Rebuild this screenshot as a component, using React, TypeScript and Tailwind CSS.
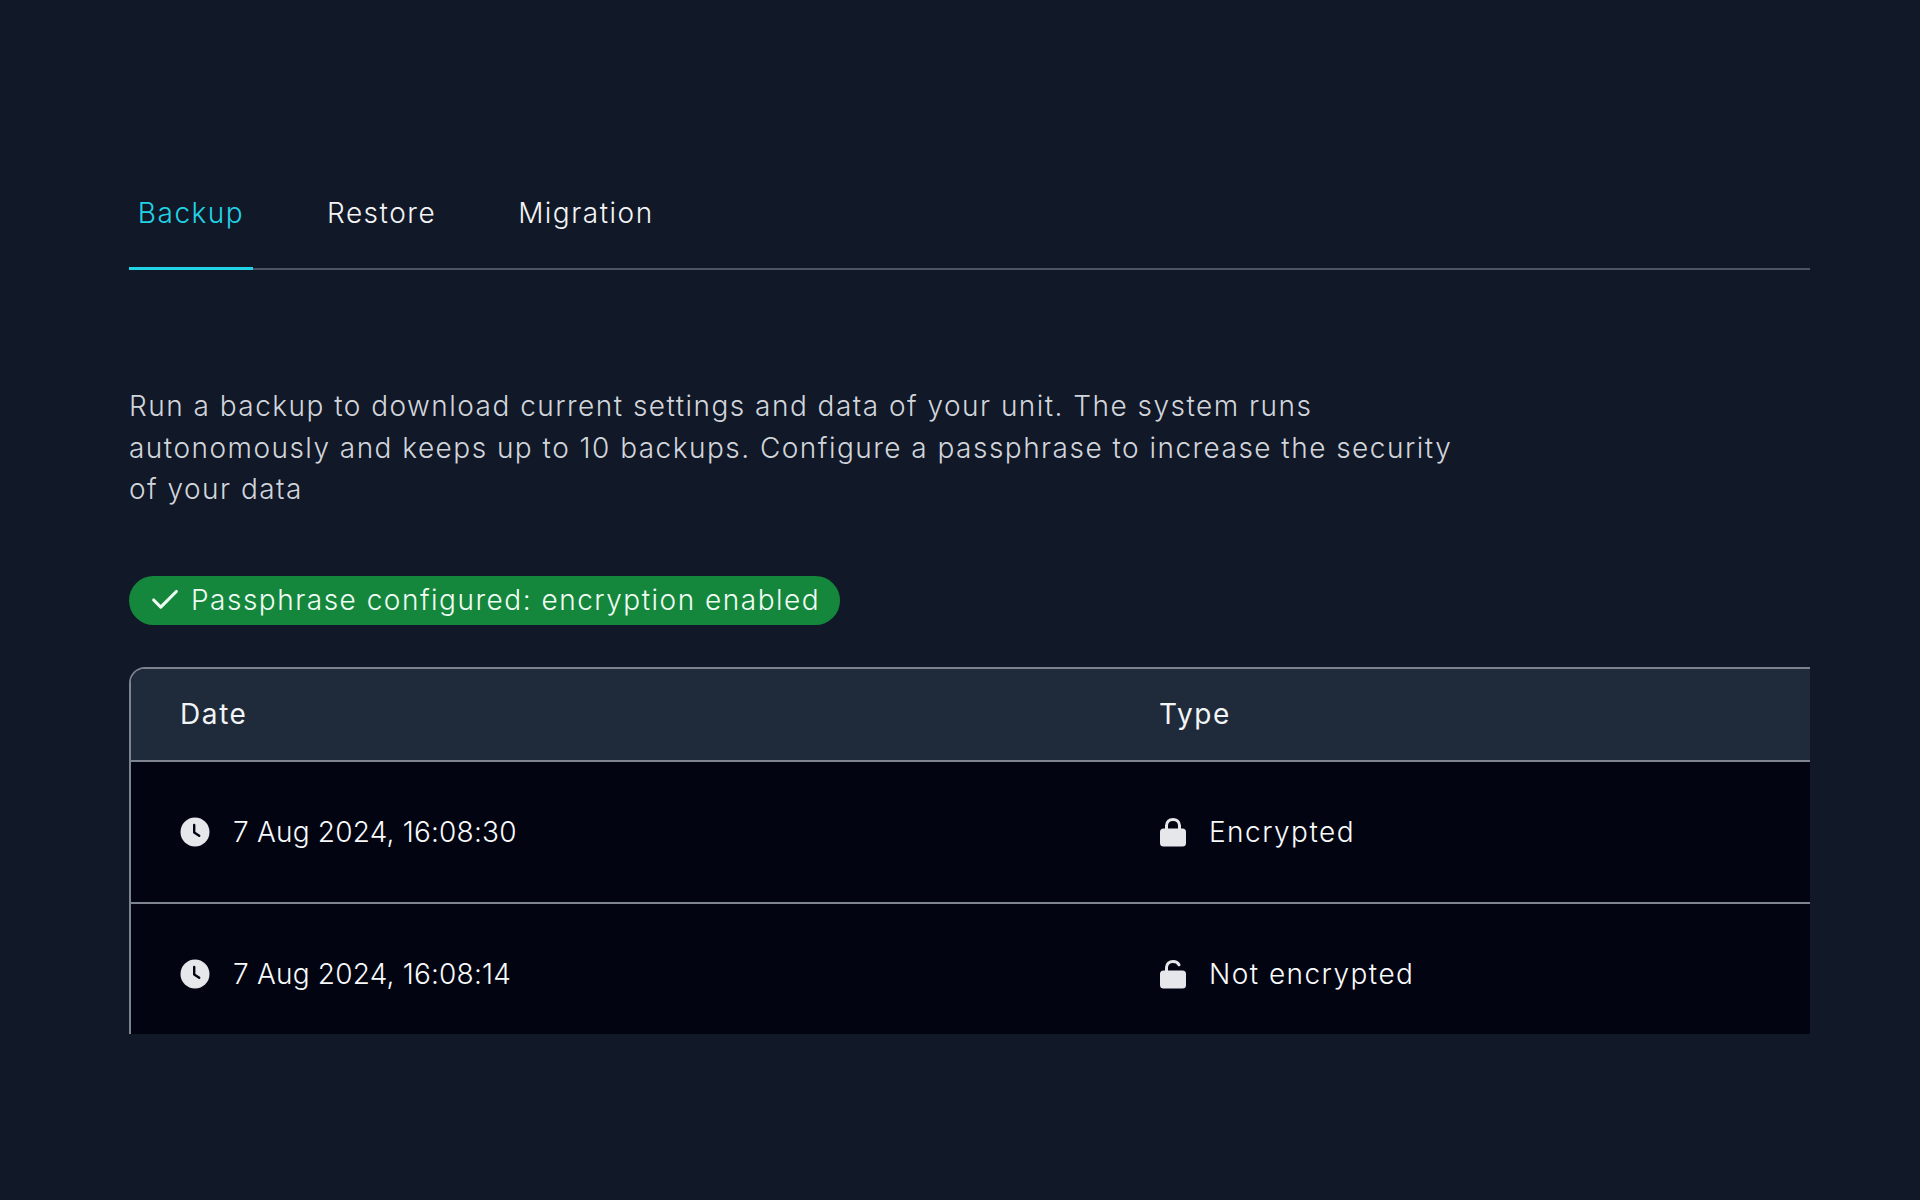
import React from 'react';
import { Check } from 'lucide-react';

const font = "[font-family:Inter,'Noto_Sans',sans-serif]";

function ClockIcon() {
  return (
    <svg viewBox="0 0 30 30" className="w-[30px] h-[30px] shrink-0">
      <circle cx="15" cy="15" r="14.5" fill="#e5e7eb" />
      <path d="M14.2 8v7.6l5 3.2" fill="none" stroke="#030512" strokeWidth="2.4" strokeLinecap="round" strokeLinejoin="round" />
    </svg>
  );
}

function LockIcon({ open }: { open?: boolean }) {
  return (
    <svg viewBox="0 0 28 30" className="w-[28px] h-[30px] shrink-0">
      <rect x="1" y="11.5" width="26" height="18" rx="3.5" fill="#e5e7eb" />
      {open ? (
        <path d="M7.5 12V8.6C7.5 4.8 10.3 2.6 14 2.6c2.7 0 4.9 1.1 6 3.2" fill="none" stroke="#e5e7eb" strokeWidth="3" strokeLinecap="round" />
      ) : (
        <path d="M7.5 12V8.6C7.5 4.8 10.3 2.4 14 2.4s6.500 2.400 6.500 6.200V12" fill="none" stroke="#e5e7eb" strokeWidth="3" />
      )}
    </svg>
  );
}

const rows = [
  { date: '7 Aug 2024, 16:08:30', type: 'Encrypted', open: false },
  { date: '7 Aug 2024, 16:08:14', type: 'Not encrypted', open: true },
];

export default function App() {
  return (
    <div className={`min-h-[1200px] bg-[#111827] pl-[129px] pr-[110px] pt-[184px] ${font}`}>
      {/* Tabs */}
      <div className="flex gap-[66px] border-b-2 border-[#4b5563] h-[86px] tracking-[1.5px]">
        <div className="w-[124px] h-[86px] border-b-[3px] border-[#22d3e6] text-center text-[#22d3e6] text-[28px] font-light leading-[58px]">Backup</div>
        <div className="px-[8px] text-[#f3f4f6] text-[28px] font-light leading-[58px]">Restore</div>
        <div className="px-[8px] text-[#f3f4f6] text-[28px] font-light leading-[58px]">Migration</div>
      </div>

      <p className="mt-[116px] text-[28px] font-light leading-[41.500px] text-[#d1d5db] tracking-[1.470px] whitespace-nowrap">
        Run a backup to download current settings and data of your unit. The system runs
        <br />
        autonomously and keeps up to 10 backups. Configure a passphrase to increase the security
        <br />
        of your data
      </p>

      {/* Passphrase badge */}
      <div className="mt-[65px] w-[711px] h-[49px] rounded-full bg-[#15873d] flex items-center pl-[19px] gap-[9px] text-[#f0fdf4] text-[28px] font-light whitespace-nowrap tracking-[1.500px]">
        <Check className="w-[34px] h-[34px]" strokeWidth={2.2} />
        <span>Passphrase configured: encryption enabled</span>
      </div>

      {/* Table, cut off at the bottom */}
      <div className="mt-[42px] h-[367px] overflow-hidden rounded-tl-[16px] border-l-2 border-t-2 border-[#7d838f] bg-[#020412]">
        <div className="grid grid-cols-[979px_1fr] h-[93px] items-center pl-[49px] bg-[#1f2b3a] border-b-2 border-[#7d838f] text-[28px] text-[#f3f4f6] tracking-[1.600px]">
          <span>Date</span>
          <span>Type</span>
        </div>
        {rows.map(row => (
          <div key={row.date} className="grid grid-cols-[979px_1fr] h-[142px] items-center pl-[49px] border-b-2 border-[#7d838f] text-[28px] font-light text-[#f9fafb]">
            <div className="flex items-center gap-[23px] tracking-[0.200px]">
              <ClockIcon />
              <span>{row.date}</span>
            </div>
            <div className="flex items-center gap-[22px] tracking-[1.450px]">
              <LockIcon open={row.open} />
              <span>{row.type}</span>
            </div>
          </div>
        ))}
      </div>
    </div>
  );
}
